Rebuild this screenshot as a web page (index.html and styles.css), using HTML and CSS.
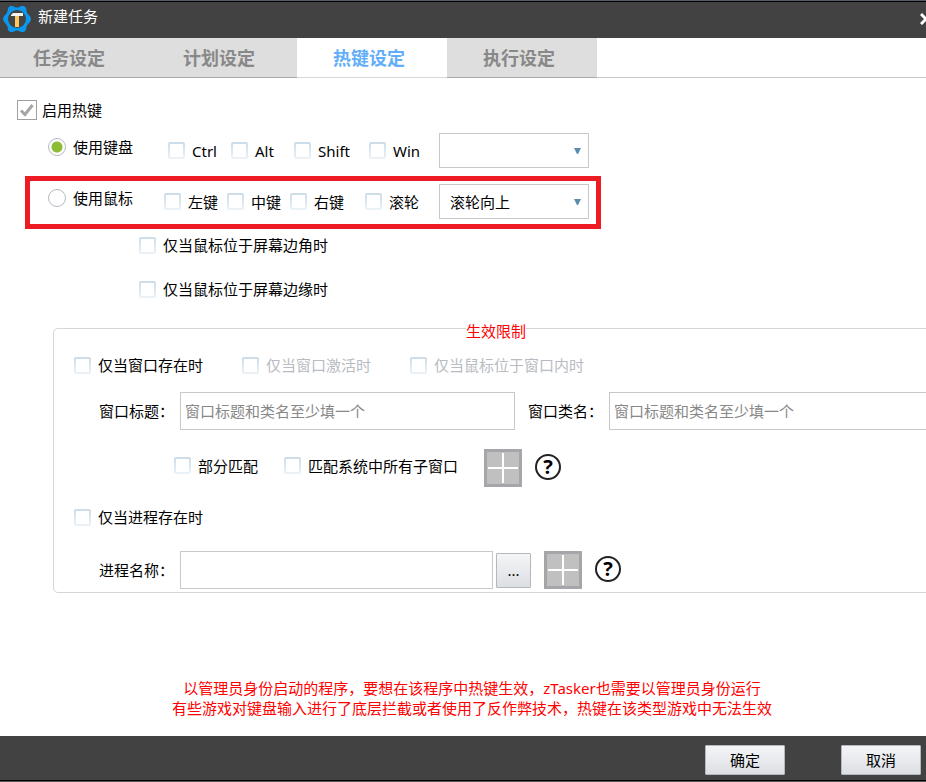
FILE: index.html
```html
<!DOCTYPE html>
<html lang="zh-CN">
<head>
  <meta charset="UTF-8" />
  <meta name="viewport" content="width=device-width, initial-scale=1.0"/>
  <title>新建任务</title>
  <link rel="stylesheet" href="styles.css">
</head>
<body>
  <div class="dialog">
    <header class="titlebar">
      <svg class="logo" viewBox="0 0 28 28" aria-hidden="true">
        <path d="M7 1 H10 Q14 4 18 1 H21 L23 3 Q23 8 27 11 L28 14 L27 17 Q23 20 23 25 L21 27 H18 Q14 24 10 27 H7 L5 25 Q5 20 1 17 L0 14 L1 11 Q5 8 5 3 Z" fill="#0c97ee"/>
        <circle cx="14" cy="14" r="9" fill="#444"/>
        <path d="M8 10 L10 8 H20 V11 H8 Z" fill="#f4f4f4"/>
        <rect x="12" y="11" width="4" height="11" fill="#ffc65c"/>
      </svg>
      <h1>新建任务</h1>
      <button class="close" type="button" aria-label="关闭">
        <svg viewBox="0 0 12 12"><path d="M1 1 L11 11 M11 1 L1 11" stroke="#fff" stroke-width="3"/></svg>
      </button>
    </header>

    <nav class="tabs">
      <button type="button">任务设定</button>
      <button type="button">计划设定</button>
      <button type="button" class="active">热键设定</button>
      <button type="button">执行设定</button>
    </nav>

    <main>
      <label class="enable"><input type="checkbox" checked>启用热键</label>

      <div class="mode">
        <label class="radio"><input type="radio" name="mode" checked>使用键盘</label>
        <div class="keys">
          <label class="check"><input type="checkbox">Ctrl</label>
          <label class="check"><input type="checkbox">Alt</label>
          <label class="check"><input type="checkbox">Shift</label>
          <label class="check"><input type="checkbox">Win</label>
        </div>
        <select aria-label="按键"><option></option></select>
      </div>

      <div class="mode mouse">
        <label class="radio"><input type="radio" name="mode">使用鼠标</label>
        <div class="keys">
          <label class="check"><input type="checkbox">左键</label>
          <label class="check"><input type="checkbox">中键</label>
          <label class="check"><input type="checkbox">右键</label>
          <label class="check"><input type="checkbox">滚轮</label>
        </div>
        <select aria-label="滚轮方向"><option>滚轮向上</option><option>滚轮向下</option></select>
      </div>

      <div class="screen">
        <label class="check"><input type="checkbox">仅当鼠标位于屏幕边角时</label>
        <label class="check"><input type="checkbox">仅当鼠标位于屏幕边缘时</label>
      </div>

      <fieldset>
        <legend>生效限制</legend>
        <div class="limits">
          <label class="check"><input type="checkbox">仅当窗口存在时</label>
          <label class="check off"><input type="checkbox" disabled>仅当窗口激活时</label>
          <label class="check off"><input type="checkbox" disabled>仅当鼠标位于窗口内时</label>
        </div>
        <div class="fields">
          <label for="winTitle">窗口标题：</label>
          <input type="text" id="winTitle" placeholder="窗口标题和类名至少填一个">
          <label for="winClass" class="second">窗口类名：</label>
          <input type="text" id="winClass" placeholder="窗口标题和类名至少填一个">
        </div>
        <div class="match">
          <label class="check"><input type="checkbox">部分匹配</label>
          <label class="check"><input type="checkbox">匹配系统中所有子窗口</label>
          <button class="plus" type="button" aria-label="选择窗口"></button>
          <button class="help" type="button">?</button>
        </div>
        <label class="check process"><input type="checkbox">仅当进程存在时</label>
        <div class="fields">
          <label for="procName">进程名称：</label>
          <input type="text" id="procName" class="proc">
          <button class="btn browse" type="button">...</button>
          <button class="plus" type="button" aria-label="选择进程"></button>
          <button class="help" type="button">?</button>
        </div>
      </fieldset>

      <p class="note">以管理员身份启动的程序，要想在该程序中热键生效，zTasker也需要以管理员身份运行<br>有些游戏对键盘输入进行了底层拦截或者使用了反作弊技术，热键在该类型游戏中无法生效</p>
    </main>

    <footer>
      <button class="btn" type="button">确定</button>
      <button class="btn" type="button">取消</button>
    </footer>
  </div>
</body>
</html>
```

FILE: styles.css
```css
* {
  box-sizing: border-box;
}
body {
  margin: 0;
  overflow: hidden;
  background: #fff;
  color: #000;
  font: 15px/20px "Noto Sans", "Noto Sans CJK SC", sans-serif;
}
button, input, select {
  font: inherit;
  color: inherit;
  margin: 0;
}
button {
  padding: 0;
  border: 0;
  background: none;
}
/* the dialog is a little wider than the window */
.dialog {
  display: flex;
  flex-direction: column;
  width: calc(100% + 18px);
  min-height: 100vh;
}

.titlebar {
  display: flex;
  align-items: center;
  height: 38px;
  padding: 0 12px 2px 3px;
  background: #424242;
  border-top: 1px solid #555b66;
  box-shadow: inset 0 1px #000;
  color: #fff;
}
.logo {
  width: 28px;
  height: 28px;
}
h1 {
  flex: 1;
  margin: 0 0 5px 7px;
  font-size: 15px;
  font-weight: normal;
}
.close svg {
  display: block;
  width: 12px;
  height: 12px;
}

.tabs {
  display: flex;
  height: 40px;
  margin-left: -3px;
  border-bottom: 1px solid #c8c8c8;
}
.tabs button {
  width: 150px;
  height: 40px;
  padding-right: 6px;
  background: #dedede;
  border-bottom: 1px solid #a8a8a8;
  color: #888;
  font-size: 18px;
  font-weight: bold;
}
.tabs .active {
  background: #fff;
  border-color: #d8d8d8;
  color: #62aef8;
}

main {
  flex: 1;
  padding-top: 22px;
}
label {
  white-space: nowrap;
}
input[type="checkbox"], input[type="radio"] {
  appearance: none;
  flex: none;
}
.enable {
  display: flex;
  align-items: center;
  gap: 5px;
  padding-left: 17px;
}
.enable input {
  width: 20px;
  height: 20px;
  border: 1px solid #a0a0a0;
  background: #fff;
}
.enable input:checked {
  background: url("data:image/svg+xml,%3Csvg xmlns='http://www.w3.org/2000/svg' viewBox='0 0 18 18'%3E%3Cpath d='M3 9.5 L7 13.5 L14.5 4' fill='none' stroke='%23a6a6a6' stroke-width='3'/%3E%3C/svg%3E");
}

.check {
  display: flex;
  align-items: center;
  gap: 7px;
}
.check input {
  width: 17px;
  height: 17px;
  border-radius: 2px;
  background: linear-gradient(#fff, #fff) center / 13px 13px no-repeat, linear-gradient(#cbdce8, #edf3f7);
}
.off {
  color: #b8bcc2;
}

.mode {
  display: grid;
  grid-template-columns: 120px 271px 150px;
  align-items: center;
  margin-top: 13px;
  padding-left: 48px;
}
.radio {
  display: flex;
  align-items: center;
  gap: 7px;
  margin-bottom: 7px;
}
.radio input {
  width: 18px;
  height: 18px;
  border: 1px solid #b4bac0;
  border-radius: 50%;
  background: #fff;
}
.radio input:checked {
  background: radial-gradient(circle, #8dbd35 5px, #fff 6px);
}
.keys {
  display: grid;
  grid-template-columns: 63px 63px 75px 70px;
}
select {
  height: 35px;
  padding: 0 10px;
  appearance: none;
  border: 1px solid #c8c8c8;
  border-radius: 0;
  background: #fff url("data:image/svg+xml,%3Csvg xmlns='http://www.w3.org/2000/svg' viewBox='0 0 7 6'%3E%3Cpath d='M0 0 H7 L4 6 H3 Z' fill='%235b8cae'/%3E%3C/svg%3E") right 7px center / 7px 6px no-repeat;
}
.mouse {
  grid-template-columns: 116px 275px 150px;
  width: 576px;
  height: 53px;
  margin: 8px 0 0 25px;
  padding: 0 0 2px 18px;
  border: 5px solid #ed1c24;
}

.screen {
  display: grid;
  gap: 24px;
  justify-content: start;
  margin-top: 6px;
  padding-left: 139px;
}

fieldset {
  min-width: 0;
  margin: 16px 5px 0 53px;
  padding: 14px 20px 3px;
  border: 1px solid #d6d6d6;
  border-radius: 5px;
}
legend {
  margin: 0 auto;
  padding: 6px 0 0;
  color: #f00;
}
.limits {
  display: grid;
  grid-template-columns: 168px 168px auto;
}
.fields {
  display: flex;
  align-items: center;
  margin-top: 17px;
  padding-left: 25px;
}
.fields label {
  flex: none;
  width: 81px;
}
.fields .second {
  margin-left: 13px;
}
input[type="text"] {
  flex: 0 0 335px;
  height: 38px;
  padding: 0 4px;
  border: 1px solid #c8c8c8;
  background: #fff;
}
input[type="text"].proc {
  flex-basis: 313px;
}
::placeholder {
  color: #888;
}
.match {
  display: flex;
  align-items: center;
  margin-top: 19px;
  padding-left: 100px;
}
.match .check {
  margin: 0 26px 5px 0;
}
.plus {
  width: 38px;
  height: 38px;
  border: 3px solid #a6a6aa;
  background:
    linear-gradient(#fff, #fff) center / 30px 2px no-repeat,
    linear-gradient(#fff, #fff) center / 2px 30px no-repeat,
    #c0c0c0;
}
.help {
  width: 26px;
  height: 26px;
  margin: 0 0 2px 13px;
  border: 2px solid #222;
  border-radius: 50%;
  font-size: 20px;
  font-weight: bold;
}
.process {
  margin-top: 20px;
}
.process + .fields {
  margin-top: 24px;
}

.note {
  margin: 85px 0 0;
  color: #f00;
  text-align: center;
}

.btn {
  width: 80px;
  height: 30px;
  border: 1px solid #b4b8be;
  border-radius: 1px;
  background: linear-gradient(#f4f5f7, #dcdfe3);
}
.browse {
  width: 35px;
  height: 35px;
  margin: 0 13px 0 3px;
}

footer {
  display: flex;
  justify-content: flex-end;
  align-items: center;
  gap: 56px;
  height: 46px;
  padding: 2px 23px 0 0;
  background: #424242;
  border-bottom: 1px solid #555;
  box-shadow: inset 0 -1px #000;
}
```
